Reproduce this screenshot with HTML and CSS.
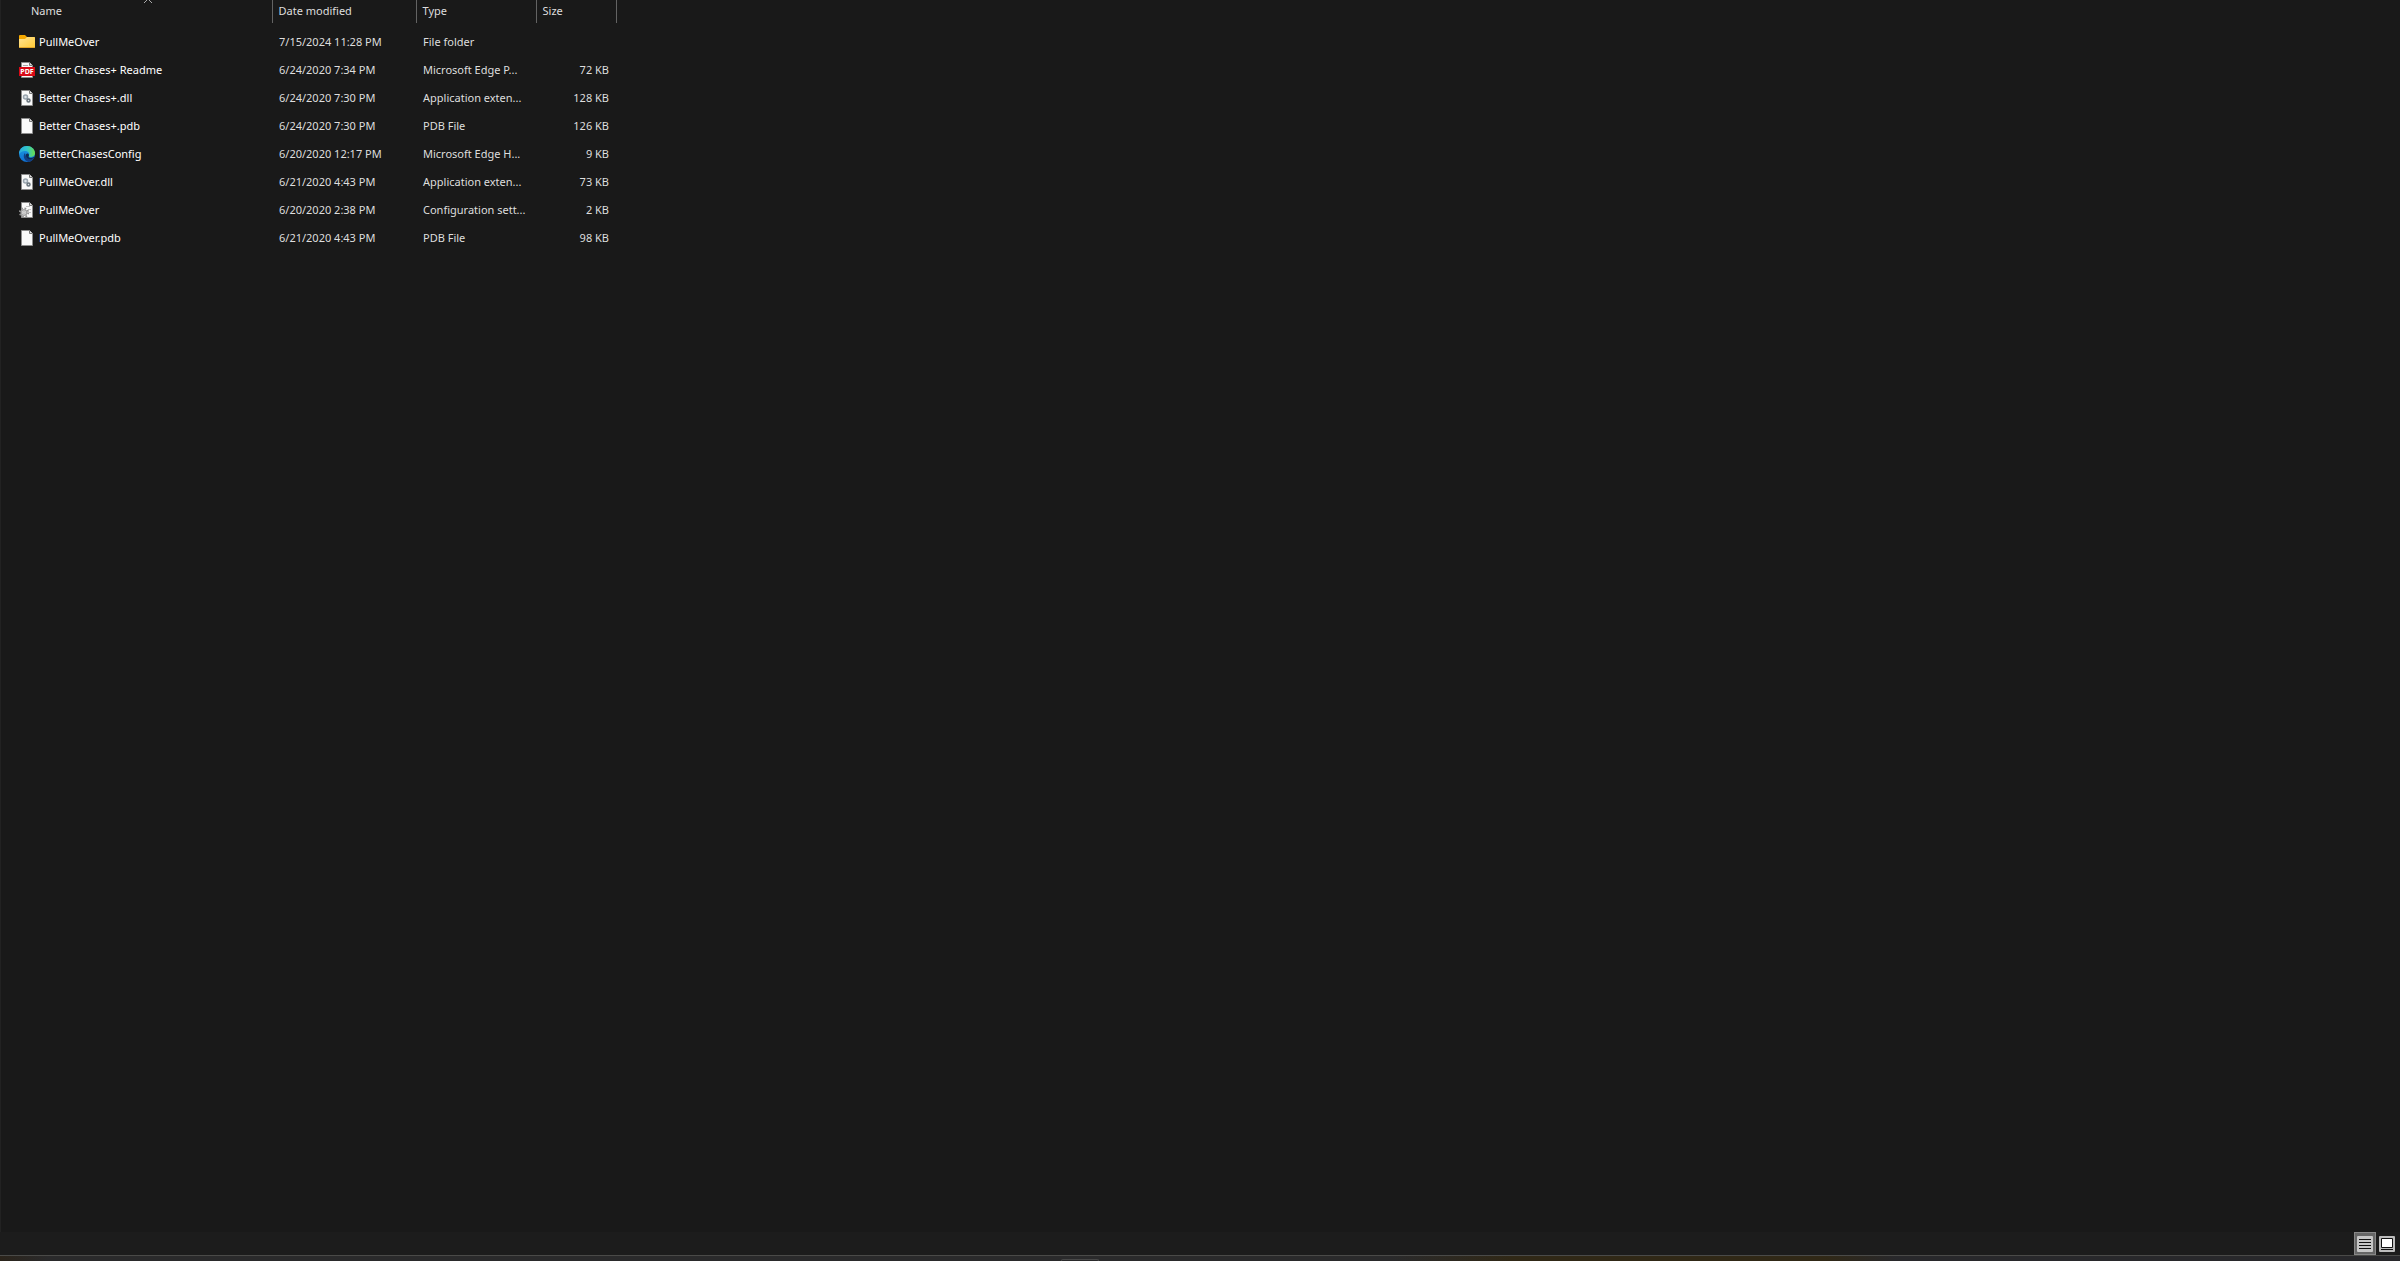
FILE: index.html
```html
<!DOCTYPE html>
<html lang="en">
<head>
<meta charset="utf-8">
<title>Files</title>
<link rel="stylesheet" href="styles.css">
</head>
<body>
<svg class="symbols" aria-hidden="true">
  <defs>
    <linearGradient id="folder-front" x1="0" y1="0" x2="1" y2="1">
      <stop offset="0" stop-color="#ffe394"/><stop offset="1" stop-color="#ffc933"/>
    </linearGradient>
    <linearGradient id="edge-top" x1="0" y1="0" x2="1" y2="0">
      <stop offset="0" stop-color="#2aa9e0"/><stop offset="0.5" stop-color="#31c5c9"/><stop offset="1" stop-color="#6be04a"/>
    </linearGradient>
    <linearGradient id="edge-left" x1="0" y1="0" x2="0" y2="1">
      <stop offset="0" stop-color="#1b9de2"/><stop offset="1" stop-color="#0f6fd0"/>
    </linearGradient>
    <symbol id="folder" viewBox="0 0 16 16">
      <path d="M0 2a1 1 0 0 1 1-1h5l2 2h7a1 1 0 0 1 1 1v3H0z" fill="#f5a800"/>
      <path d="M0 5h6l2-2h7a1 1 0 0 1 1 1v9a1 1 0 0 1-1 1H1a1 1 0 0 1-1-1z" fill="url(#folder-front)"/>
      <path d="M0 13h16a1 1 0 0 1-1 1H1a1 1 0 0 1-1-1z" fill="#e2a52a"/>
    </symbol>
    <symbol id="page" viewBox="0 0 16 16">
      <path d="M2.500.5h8l3 3v12h-11z" fill="#f9f9f9" stroke="#8c8c8c"/>
      <path d="M10.500.5v3h3" fill="#ddd" stroke="#777"/>
    </symbol>
    <symbol id="dll" viewBox="0 0 16 16">
      <use href="#page"/>
      <circle cx="6.500" cy="7" r="2" fill="#dce3e8" stroke="#9aa5ae" stroke-width="1.500"/>
      <circle cx="9.500" cy="10.500" r="1.500" fill="#e4e8ea" stroke="#68737c" stroke-width="1.500"/>
    </symbol>
    <symbol id="ini" viewBox="0 0 16 16">
      <use href="#page"/>
      <path d="M7 4.500h4M9 7.500h3M10 10.500h2" stroke="#c4c4c4"/>
      <circle cx="5" cy="10.500" r="4.200" fill="none" stroke="#8e8e8e" stroke-width="1.800" stroke-dasharray="1.700 1.600"/>
      <circle cx="5" cy="10.500" r="2.700" fill="#f2f2f2" stroke="#a4a4a4" stroke-width="1.600"/>
      <circle cx="5" cy="10.500" r="1" fill="#fff" stroke="#888" stroke-width=".6"/>
    </symbol>
    <symbol id="pdf" viewBox="0 0 16 16">
      <use href="#page"/>
      <path d="M4 3.500h5" stroke="#aaa"/>
      <path d="M0 5h16v9H0z" fill="#d90a17"/>
      <text x="8" y="12" class="pdf-label">PDF</text>
    </symbol>
    <symbol id="edge" viewBox="0 0 16 16">
      <circle cx="8" cy="8" r="8" fill="url(#edge-left)"/>
      <path d="M0 8C0 3.500 3.500 0 8 0s8 3.500 8 7c0 3-2.500 4-4.500 4-1.500 0-2-.8-1.500-1.500C11 7.500 9.500 5 6 5 3 5 1 6.500 0 8z" fill="url(#edge-top)"/>
      <path d="M6 7C3.500 9.500 5 15 9.500 15.900 12 15.600 14 14 15 12c-4.500 2-8.500 0-9-5z" fill="#123f83"/>
      <path d="M9.700 10.200c-.6 1 .5 1.700 2 1.700 1.600 0 3.100-.6 3.800-1.700L15 12c-4 2.500-8 1-8.300-3 .3-1 1-1.500 2-1.500 1.500.5 1.500 1.800 1 2.700z" fill="#0c2c54"/>
    </symbol>
  </defs>
</svg>
<div class="window">
  <main class="files">
    <table class="list">
      <colgroup><col class="col-name"><col class="col-date"><col class="col-type"><col class="col-size"></colgroup>
      <thead>
        <tr>
          <th scope="col" aria-sort="ascending"><button type="button">Name</button><svg class="sort" viewBox="0 0 8 3" aria-hidden="true"><path d="M0 3l4-4 4 4" fill="none" stroke="#aaa"/></svg></th>
          <th scope="col"><button type="button">Date modified</button></th>
          <th scope="col"><button type="button">Type</button></th>
          <th scope="col"><button type="button">Size</button></th>
        </tr>
      </thead>
      <tbody>
        <tr><td><div class="file"><svg class="icon"><use href="#folder"/></svg>PullMeOver</div></td><td>7/15/2024 11:28 PM</td><td>File folder</td><td></td></tr>
        <tr><td><div class="file"><svg class="icon"><use href="#pdf"/></svg>Better Chases+ Readme</div></td><td>6/24/2020 7:34 PM</td><td>Microsoft Edge P...</td><td>72 KB</td></tr>
        <tr><td><div class="file"><svg class="icon"><use href="#dll"/></svg>Better Chases+.dll</div></td><td>6/24/2020 7:30 PM</td><td>Application exten...</td><td>128 KB</td></tr>
        <tr><td><div class="file"><svg class="icon"><use href="#page"/></svg>Better Chases+.pdb</div></td><td>6/24/2020 7:30 PM</td><td>PDB File</td><td>126 KB</td></tr>
        <tr><td><div class="file"><svg class="icon"><use href="#edge"/></svg>BetterChasesConfig</div></td><td>6/20/2020 12:17 PM</td><td>Microsoft Edge H...</td><td>9 KB</td></tr>
        <tr><td><div class="file"><svg class="icon"><use href="#dll"/></svg>PullMeOver.dll</div></td><td>6/21/2020 4:43 PM</td><td>Application exten...</td><td>73 KB</td></tr>
        <tr><td><div class="file"><svg class="icon"><use href="#ini"/></svg>PullMeOver</div></td><td>6/20/2020 2:38 PM</td><td>Configuration sett...</td><td>2 KB</td></tr>
        <tr><td><div class="file"><svg class="icon"><use href="#page"/></svg>PullMeOver.pdb</div></td><td>6/21/2020 4:43 PM</td><td>PDB File</td><td>98 KB</td></tr>
      </tbody>
    </table>
  </main>
  <footer class="status">
    <button type="button" class="view selected" aria-label="Details view"><svg viewBox="0 0 16 16"><rect width="16" height="16" rx="1" fill="#c6c6c6"/><path d="M2 3.500h12M2 6.500h12M2 9.500h12M2 12.500h12" stroke="#111"/></svg></button>
    <button type="button" class="view" aria-label="Large thumbnails view"><svg viewBox="0 0 16 16"><rect width="16" height="16" rx="1" fill="#bdbdbd"/><path d="M2.500 2.500h11v9h-11z" fill="#fff" stroke="#111"/><path d="M2 13.500h12" stroke="#111"/></svg></button>
  </footer>
  <div class="taskbar"><div class="task"></div></div>
</div>
</body>
</html>
```
FILE: styles.css
```css
* { box-sizing: border-box; }
body {
  margin: 0;
  background: #191919;
  color: #dedede;
  font: 11px/16px "Noto Sans", "Open Sans", sans-serif;
}
.symbols { position: absolute; width: 0; height: 0; }
.window { display: flex; flex-direction: column; min-height: 100vh; }
.files { flex: 1; border-left: 1px solid #222; }
.list { width: 615px; table-layout: fixed; border-collapse: collapse; }
.col-name { width: 271px; }
.col-date { width: 144px; }
.col-type { width: 120px; }
.col-size { width: 80px; }
th {
  position: relative;
  height: 23px;
  padding: 0 0 2px 6px;
  border-right: 1px solid #636363;
  text-align: left;
  font-weight: 400;
}
th:first-child { padding-left: 30px; }
th button {
  display: block;
  width: 100%;
  padding: 0;
  border: 0;
  background: none;
  color: inherit;
  font: inherit;
  text-align: left;
}
.sort { position: absolute; top: 0; left: 50%; width: 8px; height: 3px; margin-left: 8px; }
tbody::before { content: ""; display: block; height: 5px; }
td { height: 28px; padding: 0 0 1px 7px; white-space: nowrap; }
td:first-child { padding-left: 18px; color: #fff; }
td:last-child { padding: 0 7px 1px 0; text-align: right; }
.file { display: flex; align-items: center; gap: 4px; }
.icon { width: 16px; height: 16px; flex: none; }
.pdf-label { font: 700 7px "Noto Sans", sans-serif; fill: #fff; text-anchor: middle; }
.status {
  display: flex;
  justify-content: flex-end;
  height: 23px;
  padding-right: 2px;
  background: #1c1c1c;
}
.view {
  display: grid;
  place-items: center;
  width: 22px;
  height: 23px;
  padding: 0;
  border: 0;
  background: none;
}
.view svg { width: 16px; height: 16px; }
.selected { border: 1px solid #888; background: #666; }
.taskbar {
  display: flex;
  height: 6px;
  border-top: 1px solid #4a4a48;
  background: linear-gradient(90deg, #2b241b, #2a2a2b 2%, #2a2a2b 58%, #302816 63%, #302816 76%, #28282b 79%);
}
.task { width: 38px; height: 2px; margin: 3px 0 0 1061px; border: 1px solid #484848; border-bottom: 0; border-radius: 2px 2px 0 0; }
```
